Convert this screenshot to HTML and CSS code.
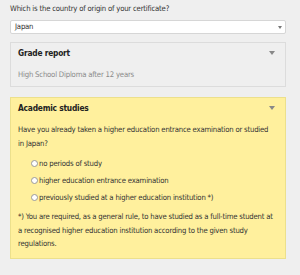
FILE: index.html
```html
<!DOCTYPE html>
<html>
<head>
<meta charset="utf-8">
<link rel="stylesheet" href="styles.css">
</head>
<body>
<div class="form">
  <div class="question">Which is the country of origin of your certificate?</div>
  <div class="select"><span>Japan</span><span class="caret small"></span></div>

  <div class="card grey">
    <div class="card-head"><span class="card-title">Grade report</span><span class="caret"></span></div>
    <div class="card-sub">High School Diploma after 12 years</div>
  </div>

  <div class="card yellow">
    <div class="card-head"><span class="card-title">Academic studies</span><span class="caret"></span></div>
    <p class="text">Have you already taken a higher education entrance examination or studied in Japan?</p>
    <ul class="radios">
      <li><span class="radio"></span>no periods of study</li>
      <li><span class="radio"></span>higher education entrance examination</li>
      <li><span class="radio"></span>previously studied at a higher education institution *)</li>
    </ul>
    <p class="note">*) You are required, as a general rule, to have studied as a full-time student at a recognised higher education institution according to the given study regulations.</p>
  </div>
</div>
</body>
</html>
```

FILE: styles.css
```css
html, body {
  margin: 0;
  background: #efefef;
}
body {
  font-family: "DejaVu Sans Condensed", "Liberation Sans", sans-serif;
  font-size: 7.7px;
  letter-spacing: -0.2px;
  color: #333;
}
.form {
  padding: 2px 14px 0 10px;
}
.question {
  line-height: 14px;
}
.select {
  margin-top: 4px;
  height: 12px;
  background: #fff;
  border: 1px solid #d6d6d6;
  border-radius: 2px;
  display: flex;
  align-items: center;
  justify-content: space-between;
  padding: 0 3px 0 4px;
  line-height: 12px;
}
.caret {
  width: 0;
  height: 0;
  border-left: 3px solid transparent;
  border-right: 3px solid transparent;
  border-top: 4px solid #888;
}
.caret.small {
  border-left-width: 2px;
  border-right-width: 2px;
  border-top-width: 3px;
  border-top-color: #777;
}
.card {
  border: 1px solid #dcdcdc;
  padding: 3px 10px 4px 7px;
}
.card.grey {
  margin-top: 8px;
  background: #efefef;
}
.card.yellow {
  margin-top: 10px;
  background: #fff09d;
  border-color: #ece08c;
  padding-bottom: 7px;
}
.card-head {
  display: flex;
  justify-content: space-between;
  align-items: center;
  line-height: 14px;
}
.card-title {
  font-weight: bold;
  font-size: 8.3px;
  color: #222;
}
.card-sub {
  margin-top: 8px;
  line-height: 14px;
  color: #8a8a8a;
}
.text {
  margin: 8px 0 0;
  line-height: 14px;
}
.radios {
  list-style: none;
  margin: 4px 0 0;
  padding: 0 0 0 13px;
}
.radios li {
  display: flex;
  align-items: center;
  height: 17px;
}
.radio {
  width: 5px;
  height: 5px;
  border: 1px solid #9a9a9a;
  border-radius: 50%;
  background: #fff;
  margin-right: 1px;
}
.note {
  margin: 4px 0 0;
  line-height: 13.5px;
}
```
